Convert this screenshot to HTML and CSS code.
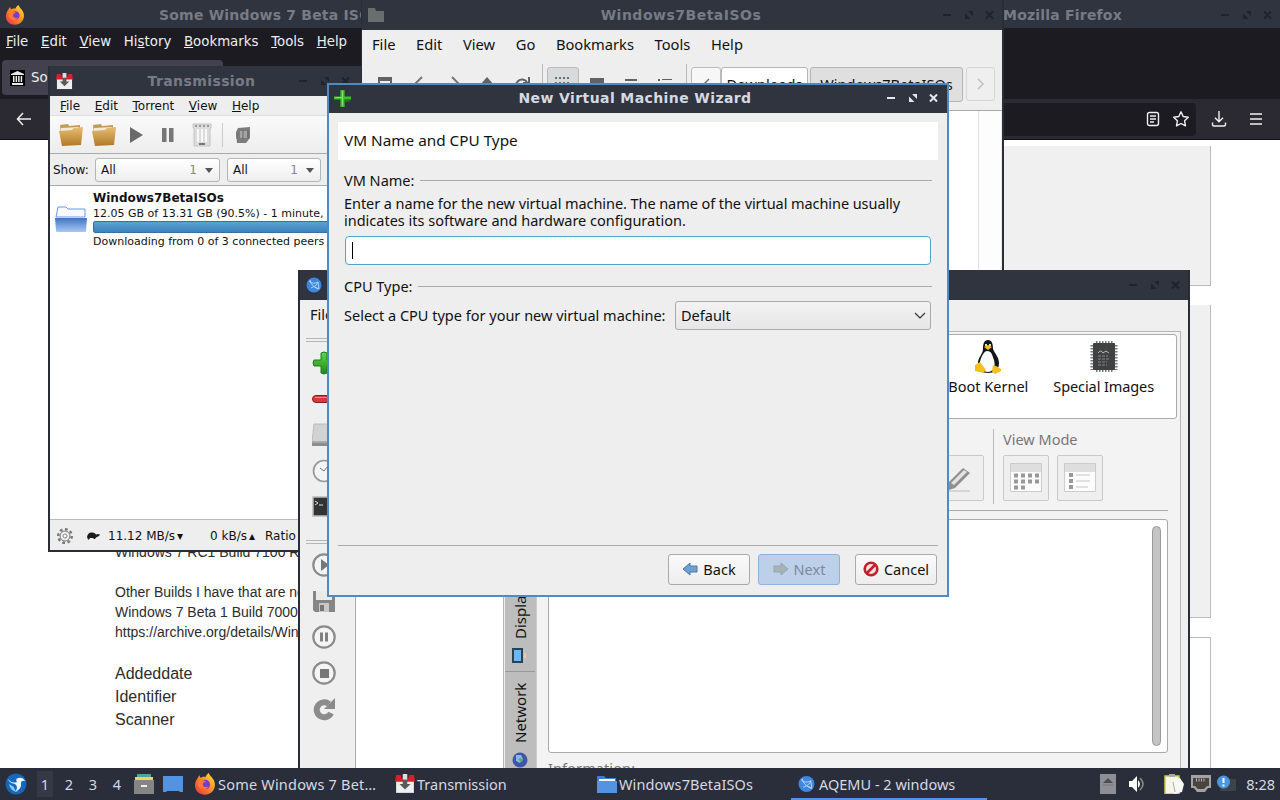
FILE: index.html
```
<!DOCTYPE html>
<html lang="en">
<head>
<meta charset="utf-8">
<title>Desktop</title>
<link rel="stylesheet" href="styles.css">
</head>
<body>
<svg width="0" height="0" class="defs">
  <defs>
    <linearGradient id="gFold" x1="0" y1="0" x2="0" y2="1"><stop offset="0" stop-color="#e8bd72"/><stop offset="1" stop-color="#b07a28"/></linearGradient>
    <linearGradient id="gBlue" x1="0" y1="0" x2="0" y2="1"><stop offset="0" stop-color="#3f74c4"/><stop offset="1" stop-color="#a9c8f4"/></linearGradient>
    <linearGradient id="gFox" x1="1" y1="0" x2="0" y2="1"><stop offset="0" stop-color="#fff04f"/><stop offset=".4" stop-color="#ff9a1f"/><stop offset="1" stop-color="#f0264f"/></linearGradient>
    <linearGradient id="gGreen" x1="0" y1="0" x2="0" y2="1"><stop offset="0" stop-color="#5fd64a"/><stop offset="1" stop-color="#1f8a1a"/></linearGradient>
    <symbol id="fox" viewBox="0 0 20 20"><path d="M3 5 5 2l1 2.500C7 3.600 9 3.200 10.500 3.600 11 2 12 .8 13.500 0c.5 2 2 3 3.500 5 3 4 2.500 9.500-1 12.500-3.500 3-9 3-12.500 0C.2 14.500 0 9.500 3 5Z" fill="url(#gFox)"/><circle cx="10.300" cy="10.500" r="4.300" fill="#7a3bd0"/><path d="M4 7c3-1.500 5 0 7 .5-2 1-3 1.500-3 3 0 2 2.500 3 5 2-1 3-8 4-9.500-1.500Z" fill="#ff7a2a"/></symbol>
    <symbol id="trans" viewBox="0 0 18 18"><path d="M1 6h16v11H1z" fill="#efefef"/><path d="M1 1h4l1 3h6l1-3h4l1 6H0z" fill="#d8202c"/><path d="M7 1h4v8h3l-5 5-5-5h3z" fill="#5a5a5a"/><path d="M7 0h4v5H7z" fill="#e5dcdc"/></symbol>
    <symbol id="plus" viewBox="0 0 24 24"><path d="M9 2q3-2 6 0v7h7q2 3 0 6h-7v7q-3 2-6 0v-7H2q-2-3 0-6h7z" fill="url(#gGreen)" stroke="#1c7a1c"/></symbol>
    <symbol id="plus2" viewBox="0 0 16 16"><path d="M6 0h4v6h6v3h-6v7H6V9H0V6h6z" fill="#35c423"/><path d="M8 1v14M1 7h7" stroke="#7be866"/><path d="M10 9h5v2h-5z" fill="#1d7d18"/></symbol>
    <symbol id="globe" viewBox="0 0 16 16"><circle cx="8" cy="8" r="7.500" fill="#3f86de"/><path d="M3 4q4 4 9 1M4 3q1 6 8 9M12 5q-1 4-7 6M12 5l1 7-4-2" fill="none" stroke="#b9d8fb" stroke-width=".9"/></symbol>
    <symbol id="folderb" viewBox="0 0 20 18"><path d="M0 1h7l2 2h10v14H0z" fill="#3b7dd0"/><path d="M2 4h16v3H2z" fill="#f2f6fb"/><path d="M0 6h20v12H0z" fill="#5294e2"/></symbol>
    <symbol id="btns" viewBox="0 0 54 12"><path d="M1 6h8" stroke="currentColor" stroke-width="2"/><path d="M26 2h5v5zM23 4.500v5.500h5.500z" fill="currentColor"/><path d="M44 2.500l7 7m0-7-7 7" stroke="currentColor" stroke-width="2"/></symbol>
  </defs>
</svg>
<div class="desktop">

  <section class="win firefox">
    <header class="tbar"><svg class="ico"><use href="#fox"/></svg><span class="t1">Some Windows 7 Beta ISOs</span><span class="t2">Mozilla Firefox</span><svg class="btns"><use href="#btns"/></svg></header>
    <nav class="fmenu"><span><u>F</u>ile</span><span><u>E</u>dit</span><span><u>V</u>iew</span><span>Hi<u>s</u>tory</span><span><u>B</u>ookmarks</span><span><u>T</u>ools</span><span><u>H</u>elp</span></nav>
    <div class="tabs"><div class="tab"><svg width="15" height="16" viewBox="0 0 15 16"><rect width="15" height="16" fill="#000"/><path d="M1 4 7.500 1 14 4v1H1zM2 13h11v2H2zM3 6h1.500v6H3zm2.600 0h1.500v6H5.600zm2.500 0h1.500v6H8.100zm2.600 0h1.500v6h-1.500z" fill="#e8e8e8"/></svg><span>Some</span></div></div>
    <div class="nav">
      <svg class="back" width="16" height="14" viewBox="0 0 16 14"><path d="M15 7H2m5-6L1.500 7 7 13" fill="none" stroke="#eee" stroke-width="1.500"/></svg>
      <div class="url">
        <svg width="14" height="16" viewBox="0 0 14 16"><rect x="1.500" y="1.500" width="11" height="13" rx="2" fill="none" stroke="#f0f0f0" stroke-width="1.400"/><path d="M4 5h6M4 8h6M4 11h4" stroke="#f0f0f0" stroke-width="1.300"/></svg>
        <svg width="18" height="18" viewBox="0 0 18 18"><path d="m9 1.800 2.200 4.700 5.100.7-3.700 3.600.9 5.100L9 13.500l-4.500 2.400.9-5.100L1.700 7.200l5.100-.7z" fill="none" stroke="#f0f0f0" stroke-width="1.400" stroke-linejoin="round"/></svg>
      </div>
      <svg width="16" height="16" viewBox="0 0 16 16"><path d="M8 0v10.500M4 6.800l4 4 4-4M1.500 11.500v2q0 1.500 1.500 1.500h10q1.500 0 1.500-1.500v-2" fill="none" stroke="#f0f0f0" stroke-width="1.400"/></svg>
      <svg width="14" height="12" viewBox="0 0 14 12"><path d="M1 1h12M1 6h12M1 11h12" stroke="#f0f0f0" stroke-width="1.400"/></svg>
    </div>
    <div class="page">
      <div class="article">
        <p>Windows 7 RC1 Build 7100 RTM</p><p>&nbsp;</p><p>Other Builds I have that are not here</p><p>Windows 7 Beta 1 Build 7000 x64</p><p>https://archive.org/details/Windows7</p>
        <dl><dt>Addeddate</dt><dt>Identifier</dt><dt>Scanner</dt></dl>
      </div>
      <aside class="cards"><div class="c1"></div><div class="c2"></div><div class="c3"></div></aside>
    </div>
  </section>

  <section class="win trans">
    <header class="tbar"><svg class="ico"><use href="#trans"/></svg><span class="tc">Transmission</span><svg class="btns"><use href="#btns"/></svg></header>
    <nav class="tmenu"><span><u>F</u>ile</span><span><u>E</u>dit</span><span><u>T</u>orrent</span><span><u>V</u>iew</span><span><u>H</u>elp</span></nav>
    <div class="ttool">
      <svg width="24" height="24" viewBox="0 0 24 24"><path d="M1 2 9 1l1 2 11-1v20H3z" fill="#c59a55"/><path d="M2 5 20 4v6H2z" fill="#f3ead5"/><path d="M0 8l13-1 2-2 9-1-2 18-19 1z" fill="url(#gFold)"/></svg>
      <svg width="24" height="24" viewBox="0 0 24 24"><path d="M1 2 9 1l1 2 11-1v20H3z" fill="#c59a55"/><path d="M2 5 20 4v6H2z" fill="#f3ead5"/><path d="M0 8l13-1 2-2 9-1-2 18-19 1z" fill="url(#gFold)"/></svg>
      <svg class="pl" width="15" height="16" viewBox="0 0 15 16"><path d="M1 0v16l13-8z" fill="#6a6a6a"/></svg>
      <svg class="pa" width="12" height="14" viewBox="0 0 12 14"><path d="M0 0h4.500v14H0zm7 0h4.500v14H7z" fill="#777"/></svg>
      <svg class="rm" width="20" height="24" viewBox="0 0 20 24"><path d="M1 1h18v4l-1 1v17H2V6L1 5z" fill="#dcdcdc" stroke="#c4c4c4"/><path d="M6 6v13M10 6v13M14 6v13" stroke="#f8f8f8" stroke-width="2"/><path d="M3 3h14" stroke="#999" stroke-width="2" stroke-dasharray="2 2"/><path d="M7 21h6" stroke="#777" stroke-width="2"/></svg>
      <i></i>
      <svg width="16" height="16" viewBox="0 0 16 16"><path d="M3 1l12-1v11l-4 5H2L1 5z" fill="#7c7c7c"/><path d="M5 4h7v7H5z" fill="#a5a5a5"/><path d="M8 3v9M2 6v6M13 3v8" stroke="#666"/></svg>
    </div>
    <div class="filter"><span>Show:</span><div class="cb cb1"><span>All</span><em>1</em><b></b></div><div class="cb cb2"><span>All</span><em>1</em><b></b></div></div>
    <div class="tlist">
      <svg width="32" height="27" viewBox="0 0 32 27"><path d="M3 1h8l2 2h17v8H1z" fill="#f7f9fd" stroke="#6d9be0"/><path d="M0 12h32l-1 13q0 1-1 1H2q-1 0-1-1z" fill="url(#gBlue)"/></svg>
      <div class="tinfo"><strong>Windows7BetaISOs</strong><span class="d1">12.05 GB of 13.31 GB (90.5%) - 1 minute,</span><div class="bar"></div><span class="d2">Downloading from 0 of 3 connected peers</span></div>
    </div>
    <footer class="tstat">
      <svg width="18" height="18" viewBox="0 0 18 18"><circle cx="9" cy="9" r="6.800" fill="none" stroke="#777" stroke-width="2.400" stroke-dasharray="2.700 2.600"/><circle cx="9" cy="9" r="5" fill="#eee" stroke="#777"/><circle cx="9" cy="9" r="2" fill="#fff" stroke="#888"/></svg>
      <svg class="tur" width="14" height="8" viewBox="0 0 14 8"><path d="M1 5Q2 0 6 .5T10 3l1-1 3 .5-1 1.500-3 1.500-1 1.500H8L7 6H4L3 7.500H2z" fill="#1b1b1b"/></svg>
      <span class="s1">11.12 MB/s</span><small>▾</small><span class="s2">0 kB/s</span><small>▴</small><span class="s3">Ratio</span>
    </footer>
  </section>

  <section class="win files">
    <header class="tbar"><svg class="fic" width="16" height="14" viewBox="0 0 16 14"><path d="M0 0h7l1 3h8v11H0z" fill="#686d6d"/></svg><span class="tc">Windows7BetaISOs</span><svg class="btns"><use href="#btns"/></svg></header>
    <nav class="pmenu ub"><span>File</span><span>Edit</span><span>View</span><span>Go</span><span>Bookmarks</span><span>Tools</span><span>Help</span></nav>
    <div class="ptool ub">
      <svg class="i1" width="174" height="34" viewBox="0 0 174 34"><path d="M5 10h14v14H5z" fill="#5e6367"/><path d="M7 14h10v5H7z" fill="#efefef"/><path d="m49 10-7 7 7 7M79 10l7 7-7 7" fill="none" stroke="#777" stroke-width="2"/><path d="m114 10 7 8h-14z" fill="#5e6367"/><path d="M154 15a6 6 0 1 0 0 7M156 10v6h-6" fill="none" stroke="#5e6367" stroke-width="2"/><path d="M169.500 -3v37" stroke="#bbb"/></svg>
      <div class="act"><svg width="16" height="16" viewBox="0 0 16 16"><path d="M0 2h16M0 7h16M0 12h16" stroke="#6b7073" stroke-width="2" stroke-dasharray="2 2"/></svg></div>
      <svg class="i2" width="112" height="34" viewBox="0 0 112 34"><path d="M11 11h14v13H11zM46 12h12v2H46zm2 5h8v2h-8zM79 12h2v2h-2zm4 0h10v1H83zm-4 5h2v2h-2zm4 0h10v1H83z" fill="#5e6367"/><path d="M107.500 -3v37" stroke="#bbb"/></svg>
      <div class="sq"><svg width="7" height="12" viewBox="0 0 7 12"><path d="M6 1 1 6l5 5" fill="none" stroke="#666" stroke-width="1.300"/></svg></div>
      <div class="crumb w">Downloads</div><div class="crumb g">Windows7BetaISOs</div>
      <div class="sq nx"><svg width="7" height="12" viewBox="0 0 7 12"><path d="m1 1 5 5-5 5" fill="none" stroke="#bbb" stroke-width="1.300"/></svg></div>
    </div>
    <div class="fview"></div>
  </section>

  <section class="win aq ub">
    <header class="tbar"><svg class="ico"><use href="#globe"/></svg><svg class="btns"><use href="#btns"/></svg></header>
    <nav class="amenu">File</nav>
    <div class="abody">
      <div class="side">
        <hr>
        <svg width="24" height="24"><use href="#plus"/></svg>
        <svg width="24" height="24" viewBox="0 0 24 24"><rect x=".5" y="8.500" width="23" height="7" rx="3.500" fill="#d63a3e" stroke="#8e1a1d"/><path d="M3 10.500h18" stroke="#f08a8a"/></svg>
        <svg width="24" height="24" viewBox="0 0 24 24"><path d="M2 1h20l2 18H0z" fill="#d2d2d2" stroke="#bbb"/><path d="M0 18h24v5H0z" fill="#8d8d8d"/><path d="M0 19h24" stroke="#c6c6c6"/></svg>
        <svg width="24" height="24" viewBox="0 0 24 24"><circle cx="12" cy="12" r="10.500" fill="#f4f4f4" stroke="#999" stroke-width="1.700"/><path d="m8 9 4 3 4-5" stroke="#777" fill="none"/></svg>
        <svg width="24" height="24" viewBox="0 0 24 24"><path d="M1 2h22v19H1z" fill="#333" stroke="#bbb" stroke-width="1.500"/><path d="m3 6 3 2-3 2m4 0h4" stroke="#ddd" fill="none"/></svg>
        <hr class="h2">
        <svg width="24" height="24" viewBox="0 0 24 24"><circle cx="12" cy="12" r="10.700" fill="#f4f4f4" stroke="#8b8b8b" stroke-width="2.200"/><path d="m9 6 8 6-8 6z" fill="#777"/></svg>
        <svg width="24" height="24" viewBox="0 0 24 24"><path d="M1 2h3v9h16V2h2l1 1v20H3l-2-2z" fill="#858585"/><path d="M4 2h16v9H4z" fill="#e9e9e9"/><path d="M7 14h10v9H7z" fill="#c8c8c8"/><path d="M8 16h4v6H8z" fill="#777"/></svg>
        <svg width="24" height="24" viewBox="0 0 24 24"><circle cx="12" cy="12" r="10.700" fill="#f4f4f4" stroke="#8b8b8b" stroke-width="2.200"/><path d="M8 7.500h3v9H8zm5 0h3v9h-3z" fill="#808080"/></svg>
        <svg width="24" height="24" viewBox="0 0 24 24"><circle cx="12" cy="12" r="10.700" fill="#f4f4f4" stroke="#8b8b8b" stroke-width="2.200"/><path d="M8 8h9v9H8z" fill="#777"/></svg>
        <svg width="24" height="24" viewBox="0 0 24 24"><path d="M17 7A7.500 7.500 0 1 0 19 16" fill="none" stroke="#8b8b8b" stroke-width="6"/><path d="M23 1v11H12z" fill="#8b8b8b"/></svg>
      </div>
      <div class="vms"></div>
      <div class="panel">
        <div class="vt"><div class="vtab v1"><span>Display</span><svg width="15" height="15" viewBox="0 0 15 15"><path d="M0 0h11v15H0z" fill="#26435c"/><path d="M2 2h7v11H2z" fill="#6bb8f2"/><path d="M12 5h2v5h-2z" fill="#e6cf9c"/></svg></div><div class="vtab v2"><span>Network</span><svg width="16" height="16" viewBox="0 0 16 16"><circle cx="8" cy="8" r="7.500" fill="#3f56a8"/><path d="M4 3h5l2 4-3 4-4-2z" fill="#8fb4e8"/><path d="m6 7 3-1 2 3-2 1z" fill="#45b860"/></svg></div></div>
        <div class="pane">
          <div class="icons">
            <div class="it k"><svg width="28" height="34" viewBox="0 0 28 34"><path d="M14 0c4 0 5 4 5 9 2 5 6 8 6 14 0 7-5 10-11 10S4 30 4 23c0-6 5-9 5-14 0-5 1-9 5-9Z" fill="#151515"/><path d="M13 11c5 0 5 4 7 9 2 7-1 12-6 12s-9-4-8-10c1-5 4-11 7-11Z" fill="#fafafa"/><path d="m10 7 4-2 4 2-4 3zM1 25l5-3 6 8-3 3-8-2zM19 25l3 1 5 3v2l-6 3-3-2z" fill="#f2c11d"/><path d="M11 4h2v2h-2zm4 0h2v2h-2z" fill="#ddd"/></svg><span>Boot Kernel</span></div>
            <div class="it s"><svg width="28" height="34" viewBox="0 0 28 34"><path d="M6 2h17M6 31h17" stroke="#777" stroke-width="2" stroke-dasharray="1.500 1.500"/><path d="M2 5v25M26 5v25" stroke="#777" stroke-width="3" stroke-dasharray="1.500 1.500"/><rect x="3" y="3" width="22" height="27" rx="1" fill="#3f4143"/><path d="M8 13q3-4 5 0l3-2 3 2" stroke="#bbb" fill="none"/><path d="M8 16h10M8 19h12M8 22h9M8 25h9" stroke="#85878a" stroke-dasharray="3 1"/></svg><span>Special Images</span></div>
          </div>
          <div class="vmode">
            <div class="tb er"><svg width="28" height="32" viewBox="0 0 28 32"><path d="m2 20 14-14 7 5L8 26l-6 2z" fill="#8f8f8f"/><path d="m4 21 13-13 3 2L7 23z" fill="#e3e3e3"/><path d="M2 29h21" stroke="#ccc" stroke-width="1.500"/></svg></div>
            <div class="vm"><label>View Mode</label><div class="vb">
              <div class="tb"><svg width="32" height="30" viewBox="0 0 32 30"><path d="M.5.500h31v28H.5z" fill="#fcfcfc" stroke="#ccc"/><path d="M1 1h30v8H1z" fill="#dedede"/><path d="M4 12.500h25M4 18.500h25M4 24.500h11" stroke="#999" stroke-width="4" stroke-dasharray="4 3"/></svg></div>
              <div class="tb"><svg width="32" height="30" viewBox="0 0 32 30"><path d="M.5.500h31v28H.5z" fill="#fcfcfc" stroke="#ccc"/><path d="M1 1h30v8H1z" fill="#dedede"/><path d="M5 10h4v4H5zm0 6h4v4H5zm0 6h4v4H5z" fill="#999"/><path d="M12 12h14M12 18h14M12 24h12" stroke="#c4c4c4"/></svg></div>
            </div></div>
          </div>
          <div class="info"><i></i></div>
          <div class="inf">Information:</div>
        </div>
      </div>
    </div>
  </section>

  <section class="win wiz ub">
    <header class="tbar"><svg class="ico"><use href="#plus2"/></svg><span class="tc">New Virtual Machine Wizard</span><svg class="btns"><use href="#btns"/></svg></header>
    <div class="wbody">
      <h1>VM Name and CPU Type</h1>
      <div class="grp"><span>VM Name:</span><i></i></div>
      <p><span class="l1">Enter a name for the new virtual machine. The name of the virtual machine usually</span><br>indicates its software and hardware configuration.</p>
      <div class="inp"><i></i></div>
      <div class="grp g2"><span>CPU Type:</span><i></i></div>
      <div class="cpu"><span>Select a CPU type for your new virtual machine:</span><div class="sel"><span>Default</span><svg width="12" height="7" viewBox="0 0 12 7"><path d="m1 1 5 5 5-5" fill="none" stroke="#333" stroke-width="1.200"/></svg></div></div>
      <div class="acts">
        <button><svg width="16" height="14" viewBox="0 0 16 14"><path d="M1 7 8 1v3h7v6H8v3z" fill="#6c9fd4" stroke="#54779d"/></svg>Back</button>
        <button class="nx"><svg width="16" height="14" viewBox="0 0 16 14"><path d="M15 7 8 1v3H1v6h7v3z" fill="#a7b3b2" stroke="#94a5b5"/></svg>Next</button>
        <button class="ca"><svg width="16" height="16" viewBox="0 0 16 16"><circle cx="8" cy="8" r="6.300" fill="#f3e3e3" stroke="#c3202c" stroke-width="2.600"/><path d="m3.500 12.500 9-9" stroke="#c3202c" stroke-width="2.600"/></svg>Cancel</button>
      </div>
    </div>
  </section>

  <footer class="panelbar ub">
    <svg class="start" width="22" height="22" viewBox="0 0 22 22"><circle cx="11" cy="11" r="10.500" fill="#1668bd"/><path d="M3 6q4 5 9 3-2-3 1-4 5-1 7 3-4-1-4 2 1 6-6 9 4-5 0-8-6-1-7-5Z" fill="#eaf5ff"/><path d="M4 11q1 7 9 8-4-2-4-5z" fill="#8cc8f5"/></svg>
    <div class="desks"><span class="on">1</span><span>2</span><span>3</span><span>4</span></div>
    <svg class="cab" width="20" height="20" viewBox="0 0 20 20"><path d="M3 0h14v4H3z" fill="#4fa59b"/><path d="M1 3h18v4H1z" fill="#ecd45e"/><path d="M0 6h20v14H0z" fill="#858585"/><path d="M7 11h6v2H7z" fill="#eee"/></svg>
    <svg class="desk" width="20" height="17" viewBox="0 0 20 17"><path d="M0 0h20v16h-3l-1-1H4l-1 1H0z" fill="#5294e2"/></svg>
    <div class="task k1"><svg width="22" height="22"><use href="#fox"/></svg><span>Some Windows 7 Bet…</span></div>
    <div class="task k2"><svg width="20" height="20"><use href="#trans"/></svg><span>Transmission</span></div>
    <div class="task k3"><svg width="20" height="18"><use href="#folderb"/></svg><span>Windows7BetaISOs</span></div>
    <div class="task k4"><svg width="17" height="18"><use href="#globe"/></svg><span>AQEMU - 2 windows</span></div>
    <div class="tray">
      <svg width="16" height="20" viewBox="0 0 16 20"><path d="M0 0h16v20H0z" fill="#8d8f94"/><path d="m8 4 5 5H3z" fill="#4b4d54"/><path d="M3 11h10" stroke="#777"/></svg>
      <svg class="vol" width="18" height="16" viewBox="0 0 18 16"><path d="M1 5h3l5-5v16l-5-5H1z" fill="#fff"/><path d="M10 4q4 4 0 8" fill="#fff"/><path d="M12 2q6 6 0 12" fill="none" stroke="#8b8d94" stroke-width="1.500"/></svg>
      <svg class="clip" width="20" height="20" viewBox="0 0 20 20"><path d="M1 2h14v18H1z" fill="#f5f6e8" stroke="#c9d23c" stroke-width="1.500"/><path d="M5 0h6v3H5z" fill="#aaa"/><path d="m8 5 8-1 4 6-2 8-8 2z" fill="#f6f8f2"/><path d="m9 8 2 10" stroke="#aaa"/></svg>
      <svg class="net" width="20" height="18" viewBox="0 0 20 18"><path d="M0 0h20v13h-3l-3 4H6l-3-4H0z" fill="#a3a3a3"/><path d="M2 3h16v8h-2l-3 3H7l-3-3H2z" fill="#49443f"/><path d="M5 5h10" stroke="#bbb" stroke-width="3" stroke-dasharray="1 1.500"/></svg>
      <svg class="upd" width="20" height="18" viewBox="0 0 20 18"><path d="M5 4h14v12H3z" fill="#3d434b"/><circle cx="6.500" cy="7" r="6.500" fill="#4a96e0"/><path d="M6.500 3v5m0 1.500v2" stroke="#fff" stroke-width="2"/></svg>
      <span>8:28</span>
    </div>
  </footer>
</div>
</body>
</html>
```
FILE: styles.css
```
* { box-sizing: border-box; }
html, body { margin: 0; padding: 0; }
body { width: 1280px; height: 800px; overflow: hidden; font-family: "DejaVu Sans", sans-serif; color: #111; }
svg { display: block; flex: none; }
p, dl, dt, h1 { margin: 0; font-weight: normal; }
.defs { position: absolute; }
.desktop { position: relative; width: 1280px; height: 800px; overflow: hidden; background: #fff; }
.ub { font-family: "Noto Sans", sans-serif; font-size: 14.5px; }
.win { position: absolute; overflow: hidden; display: flex; flex-direction: column; background: #eee; white-space: nowrap; }
.tbar { display: flex; align-items: center; flex: none; height: 30px; background: #2f343f; color: #777b86; font: bold 14px/28px "DejaVu Sans", sans-serif; letter-spacing: .4px; }
.tbar .ico { width: 18px; height: 18px; }
.tbar .btns { width: 54px; height: 12px; color: #20232b; margin-left: auto; }
.tc { flex: 1; text-align: center; }
.tc + .btns { margin-left: 0; }

.firefox { left: 0; top: 0; width: 1280px; height: 768px; background: #fff; }
.firefox .tbar { height: 28px; padding: 2px 6px 0 5px; letter-spacing: .2px; }
.firefox .ico { width: 20px; height: 20px; }
.firefox .t1 { width: 203px; margin-left: 134px; overflow: hidden; }
.firefox .t2 { margin-left: 641px; }
.fmenu { display: flex; gap: 12.700px; height: 29px; flex: none; padding: 0 6px; background: #1c1b22; color: #eee; font-size: 13.330px; line-height: 27px; }
.tabs { height: 42px; flex: none; background: #1c1b22; padding: 3px 2px 0; }
.tab { display: flex; align-items: center; gap: 6px; width: 221px; height: 35px; padding-left: 8px; border-radius: 4px; background: #42414d; color: #eee; font-size: 13.330px; }
.nav { display: flex; align-items: center; height: 41px; flex: none; background: #2b2a33; padding-left: 16px; border-bottom: 1px solid #111; }
.url { display: flex; justify-content: flex-end; align-items: center; gap: 12px; width: 996px; height: 33px; margin: 0 15px 0 168px; padding-right: 6px; background: #1c1b22; border-radius: 4px; }
.nav > svg:last-child { margin-left: 22px; }
.page { display: flex; flex: 1; justify-content: space-between; }
.article { padding: 402px 0 0 115px; font: 14px/20px "Liberation Sans", Arial, sans-serif; color: #2c2c2c; }
.article dl { margin-top: 20px; font-size: 16px; line-height: 23px; }
.cards { width: 300px; margin-right: 69px; padding-top: 6px; display: flex; flex-direction: column; gap: 19px; }
.cards div { flex: none; background: #f0f0f0; border: solid #bbb; border-width: 0 1px 1px 0; }
.cards .c1 { height: 140px; }
.cards .c2 { height: 313px; }
.cards .c3 { height: 160px; background: #fff; border-top-width: 1px; }

.trans { left: 48px; top: 66px; width: 313px; height: 486px; border: solid #2b2d36; border-width: 0 0 2px 2px; font-size: 12px; }
.trans .tbar { padding: 0 9px 0 6px; }
.trans .ico { width: 17px; height: 17px; }
.trans .tc { padding-left: 32px; }
.tmenu { display: flex; gap: 14.600px; height: 20px; flex: none; padding-left: 10px; line-height: 20px; border-bottom: 1px solid #ddd; }
.ttool { display: flex; align-items: center; height: 38px; flex: none; padding-left: 9px; gap: 9px; background: linear-gradient(#fafafa, #ededed); border-bottom: 1px solid #aaa; }
.pl { margin-left: 4px; }
.pa { margin-left: 9px; }
.rm { margin-left: 9px; }
.ttool i { width: 1px; height: 24px; background: #ccc; margin: 0 3px 0 1px; }
.filter { display: flex; align-items: center; height: 32px; flex: none; padding: 1px 0 0 3px; border-bottom: 1px solid #aaa; }
.filter > span { width: 42px; }
.cb { display: flex; align-items: center; height: 24px; border: 1px solid #b5b5b5; border-radius: 3px; background: linear-gradient(#fff, #eee); padding: 0 6px 0 5px; margin-right: 7px; }
.cb1 { width: 125px; }
.cb2 { width: 94px; }
.cb em { margin-left: auto; font-style: normal; color: #888; }
.cb b { margin-left: 8px; border: 4px solid transparent; border-top: 5px solid #555; border-bottom: 0; }
.tlist { display: flex; flex: 1; background: #fff; padding: 4px 0 0 5px; gap: 6px; }
.tlist > svg { margin-top: 16px; }
.tinfo { display: flex; flex-direction: column; font-size: 11px; line-height: 16px; }
.tinfo strong { font-size: 12px; }
.bar { width: 260px; height: 12px; background: linear-gradient(#5aa3d3, #3c82bb); border: 1px solid #356fa3; border-radius: 2px; margin: -1px 0 1px; }
.tstat { display: flex; align-items: center; height: 31px; flex: none; border-top: 1px solid #bbb; padding: 1px 0 0 6px; }
.tur { margin: 0 8px 0 12px; }
.tstat small { font-size: 12px; margin: 1px 0 0 2px; width: 9px; }
.s2 { margin-left: 24px; }
.s3 { margin-left: 7px; }

.files { left: 361px; top: 0; width: 643px; height: 300px; border: solid #2b2d36; border-width: 0 2px 0 1px; }
.files .tbar { padding: 0 6px 0 6px; letter-spacing: .5px; }
.files .tc { padding-left: 36px; }
.pmenu { display: flex; flex: none; gap: 20.600px; height: 30px; padding-left: 10px; line-height: 29px; font-size: 14.700px; }
.ptool { display: flex; align-items: flex-start; flex: none; height: 51px; padding-top: 7px; border-bottom: 1px solid #aaa; }
.ptool > svg { overflow: visible; }
.i1 { margin-left: 11px; }
.act { width: 32px; height: 34px; display: flex; align-items: center; justify-content: center; background: #d7dbdc; border: 1px solid #bbb; border-radius: 3px; }
.sq { width: 30px; height: 34px; flex: none; display: flex; align-items: center; justify-content: center; background: #f7f7f7; border: 1px solid #bbb; border-radius: 3px; }
.crumb { flex: none; height: 35px; line-height: 33px; border: 1px solid #b5b5b5; border-radius: 3px; text-align: center; }
.crumb.w { width: 87px; background: #fff; }
.crumb.g { width: 153px; background: #dfdfdf; margin: 0 3px 0 2px; }
.nx.sq { border-color: #d5d5d5; background: #efefef; width: 29px; }
.fview { flex: 1; background: #fff; border-right: 1px solid #eee; box-shadow: inset -22px 0 #fdfdfd, inset -23px 0 #e2e2e2; }

.aq { left: 298px; top: 270px; width: 892px; height: 498px; border: solid #2b2d36; border-width: 0 2px; background: #efefef; }
.aq .tbar { padding: 0 6px 0 6px; }
.aq .ico { width: 16px; height: 16px; }
.amenu { height: 31px; flex: none; line-height: 29px; padding-left: 10px; }
.abody { display: flex; flex: 1; min-height: 0; }
.side { width: 56px; border-right: 1px solid #aaa; padding: 7px 0 0 12px; display: flex; flex-direction: column; flex: none; gap: 12px; }
.side hr { width: 40px; height: 4px; margin: 0 0 -3px -6px; border: solid #b5b5b5; border-width: 1px 0; flex: none; }
.side .h2 { margin: 9px 0 -3px -6px; }
.vms { width: 147px; background: #fff; flex: none; }
.panel { flex: 1; display: flex; border: 1px solid #b5b5b5; border-bottom: 0; margin-right: 7px; min-height: 0; background: #f3f3f3; }
.vt { width: 33px; border-left: 1px solid #eee; background: #bdbdbd; flex: none; display: flex; flex-direction: column; border-right: 1px solid #ccc; }
.vtab { writing-mode: vertical-rl; transform: rotate(180deg); display: flex; flex-direction: row-reverse; align-items: center; justify-content: flex-end; line-height: 30px; gap: 9px; width: 30px; flex: none; font-size: 15px; }
.vtab svg { transform: rotate(180deg); }
.v1 { height: 340px; border-top: 1px solid #999; padding-top: 8px; justify-content: flex-end; }
.v2 { height: 105px; padding-top: 9px; }
.pane { flex: 1; display: flex; flex-direction: column; padding: 2px 3px 0 11px; min-width: 0; }
.icons { display: flex; justify-content: flex-end; height: 85px; flex: none; background: #fff; border: 1px solid #aaa; border-radius: 3px; padding: 5px 22px 0 0; gap: 25px; }
.it { display: flex; flex-direction: column; align-items: center; }
.it span { line-height: 24px; }
.it.s span { letter-spacing: -.1px; }
.vmode { display: flex; justify-content: flex-end; flex: none; height: 92px; border-bottom: 1px solid #aaa; margin-right: 9px; padding-top: 10px; }
.tb { width: 46px; height: 46px; border: 1px solid #c9c9c9; border-radius: 2px; background: #efefef; display: flex; align-items: center; justify-content: center; }
.er { margin: 26px 9px 0 0; }
.vm { border-left: 1px solid #bbb; height: 75px; width: 175px; padding-left: 9px; color: #777; }
.vm label { display: block; height: 26px; line-height: 21px; }
.vb { display: flex; gap: 8px; }
.info { height: 234px; flex: none; margin: 8px 9px 0 0; background: #fff; border: 1px solid #aaa; border-radius: 3px; display: flex; justify-content: flex-end; padding: 6px 6px; }
.info i { width: 9px; border: 1px solid #999; border-radius: 5px; background: #c4c4c4; box-shadow: -7px 0 0 -1px #fff; }
.inf { line-height: 20px; margin-top: 5px; color: #777; letter-spacing: .1px; }

.wiz { left: 327px; top: 83px; width: 622px; height: 514px; border: 2px solid #4d8ac6; }
.wiz .tbar { height: 28px; color: #d3dae3; padding: 0 7px 2px 5px; line-height: 26px; }
.wiz .ico { width: 17px; height: 17px; }
.wiz .btns { color: #e4e7ed; }
.wiz .tc { padding-left: 33px; }
.wbody { display: flex; flex-direction: column; flex: 1; padding: 9px 9px 0 9px; }
.wbody h1 { height: 38px; line-height: 37px; font-size: 15.300px; background: #fff; padding-left: 6px; }
.grp { display: flex; align-items: center; height: 20px; margin: 10px 6px 0; gap: 6px; }
.grp i { flex: 1; height: 1px; background: #aaa; }
.wbody p { line-height: 17px; margin: 5px 0 7px 6px; }
.l1 { letter-spacing: -.07px; }
.inp { height: 29px; margin: 0 7px; border: 1px solid #4fa5c9; border-radius: 4px; background: #fff; padding: 5px 6px; }
.inp i { display: block; width: 1px; height: 17px; background: #000; }
.cpu { display: flex; align-items: center; justify-content: space-between; height: 29px; margin: 5px 7px 0 6px; }
.cpu span { padding-bottom: 2px; }
.sel { display: flex; align-items: center; justify-content: space-between; width: 256px; height: 29px; padding: 0 4px 0 5px; border: 1px solid #aaa; border-radius: 3px; background: linear-gradient(#f3f3f3, #e6e6e6); }
.acts { margin-top: auto; height: 50px; border-top: 1px solid #aaa; display: flex; justify-content: flex-end; padding: 8px 1px 0 0; gap: 8px; }
.acts button { display: flex; align-items: center; justify-content: center; gap: 5px; width: 82px; height: 31px; padding: 0 0 1px; font: inherit; color: #111; border: 1px solid #aaa; border-radius: 3px; background: linear-gradient(#fafafa, #ededed); }
.acts .nx { background: #bdd0ea; border-color: #8eb2dd; color: #7c8999; margin-right: 7px; }
.grp.g2 { margin-top: 11px; }

.panelbar { position: absolute; left: 0; top: 768px; width: 1280px; height: 32px; background: #2a2d3a; color: #d3dae3; display: flex; align-items: center; white-space: nowrap; }
.start { margin-left: 5px; }
.desks { display: flex; margin-left: 10px; gap: 8px; }
.desks span { width: 16px; text-align: center; line-height: 26px; }
.desks .on { background: #353845; }
.cab { margin-left: 9px; }
.desk { margin-left: 9px; }
.task { display: flex; align-items: center; gap: 2px; height: 32px; }
.k1 { margin-left: 11px; width: 201px; letter-spacing: .2px; }
.k2 { width: 202px; }
.k3 { width: 194px; letter-spacing: .1px; }
.k4 { width: 196px; padding-left: 7px; gap: 4px; border-bottom: 2px solid #5294e2; border-top: 2px solid transparent; }
.tray { display: flex; align-items: center; margin-left: auto; padding-right: 5px; }
.vol { margin-left: 12px; }
.clip { margin-left: 18px; }
.net { margin-left: 7px; }
.upd { margin: 0 9px 0 6px; }
```
